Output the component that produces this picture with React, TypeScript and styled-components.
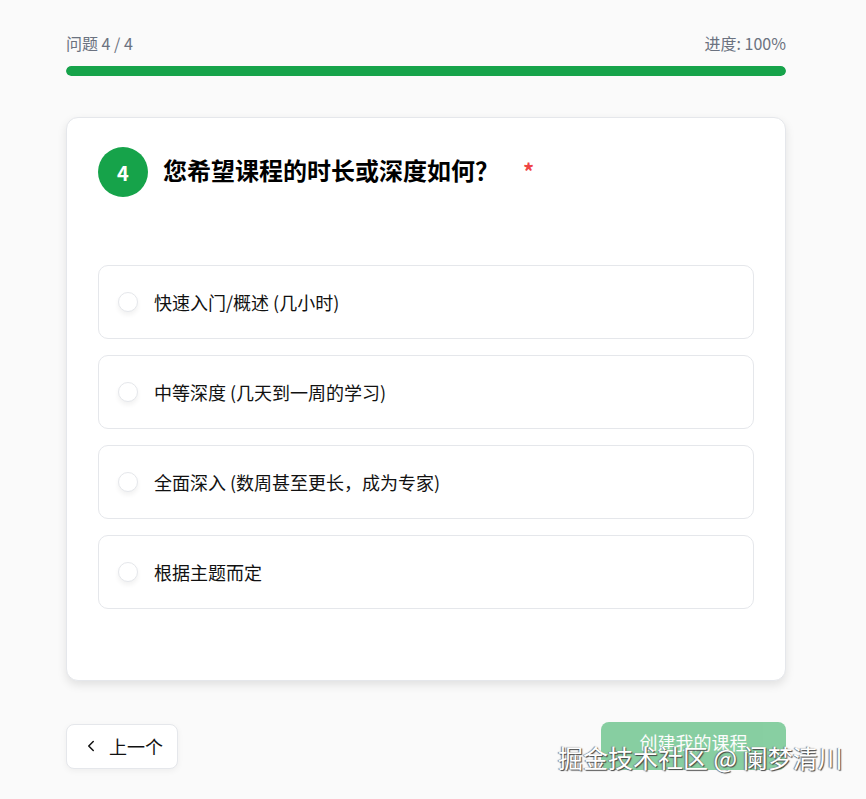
import React, { useState } from 'react';
import styled, { createGlobalStyle } from 'styled-components';
import { ChevronLeft } from 'lucide-react';

const GlobalStyle = createGlobalStyle`
  body {
    margin: 0;
    background: #fafafa;
    font-family: "Noto Sans CJK SC", "Noto Sans", sans-serif;
    color: #111827;
  }
`;

const Page = styled.div`
  position: relative;
  width: 866px;
  min-height: 799px;
  box-sizing: border-box;
  padding: 31px 80px 0 66px;
`;

const ProgressHead = styled.div`
  display: flex;
  justify-content: space-between;
  align-items: center;
  font-size: 16px;
  line-height: 24px;
  color: #6b7280;
`;

const Track = styled.div`
  margin-top: 11px;
  height: 10px;
  border-radius: 5px;
  background: #e5e7eb;
  overflow: hidden;
`;

const Fill = styled.div`
  height: 100%;
  border-radius: 5px;
  background: #16a34a;
`;

const Card = styled.div`
  margin-top: 41px;
  background: #fff;
  border: 1px solid #e5e7eb;
  border-radius: 12px;
  box-shadow: 0 4px 10px rgba(0, 0, 0, 0.1);
  padding: 29px 31px 71px;
`;

const QuestionHead = styled.div`
  display: flex;
  align-items: center;
  gap: 15px;
  margin-bottom: 68px;
`;

const Badge = styled.div`
  width: 50px;
  height: 50px;
  border-radius: 50%;
  background: #16a34a;
  color: #fff;
  font-size: 20px;
  font-weight: 700;
  display: flex;
  align-items: center;
  justify-content: center;
  flex-shrink: 0;
`;

const QuestionTitle = styled.h2`
  margin: 0 0 4px;
  font-size: 24px;
  line-height: 32px;
  font-weight: 700;
  color: #000;
`;

const Required = styled.span`
  color: #ef4444;
  margin-left: 24px;
  font-size: 22px;
`;

const Options = styled.div`
  display: flex;
  flex-direction: column;
  gap: 16px;
`;

const Option = styled.label<{ $active: boolean }>`
  display: flex;
  align-items: center;
  gap: 16px;
  height: 74px;
  box-sizing: border-box;
  padding: 0 19px;
  border: 1px solid ${p => (p.$active ? '#16a34a' : '#e5e7eb')};
  border-radius: 10px;
  background: #fff;
  font-size: 18px;
  color: #111;
  cursor: pointer;
`;

const Radio = styled.span<{ $active: boolean }>`
  width: 18px;
  height: 18px;
  border-radius: 50%;
  border: 1px solid #e5e7eb;
  box-shadow: 0 3px 5px rgba(0, 0, 0, 0.06);
  background: ${p => (p.$active ? '#16a34a' : '#fff')};
  flex-shrink: 0;
`;

const Footer = styled.div`
  margin-top: 41px;
  display: flex;
  justify-content: space-between;
  align-items: center;
`;

const BackButton = styled.button`
  display: flex;
  align-items: center;
  gap: 9px;
  height: 45px;
  padding: 0 14px 0 15px;
  background: #fff;
  border: 1px solid #e5e7eb;
  border-radius: 8px;
  box-shadow: 0 2px 6px rgba(0, 0, 0, 0.05);
  font-family: inherit;
  font-size: 18px;
  color: #111;
  cursor: pointer;
`;

const SubmitButton = styled.button`
  width: 185px;
  height: 48px;
  padding-bottom: 10px;
  border: none;
  border-radius: 8px;
  background: #16a34a;
  opacity: 0.5;
  color: #fff;
  font-family: inherit;
  font-size: 18px;
  cursor: not-allowed;
`;

const Watermark = styled.div`
  position: absolute;
  left: 558px;
  top: 739px;
  font-size: 25px;
  line-height: 36px;
  color: #fff;
  text-shadow: 1px 1px 1px #444, -1px 0 1px #777;
  white-space: nowrap;
  pointer-events: none;
`;

const options = [
  '快速入门/概述 (几小时)',
  '中等深度 (几天到一周的学习)',
  '全面深入 (数周甚至更长，成为专家)',
  '根据主题而定',
];

export default function App() {
  const [selected, setSelected] = useState<number | null>(null);

  return (
    <Page>
      <GlobalStyle />
      <ProgressHead>
        <span>问题 4 / 4</span>
        <span>进度: 100%</span>
      </ProgressHead>
      <Track>
        <Fill style={{ width: '100%' }} />
      </Track>

      <Card>
        <QuestionHead>
          <Badge>4</Badge>
          <QuestionTitle>
            您希望课程的时长或深度如何？<Required>*</Required>
          </QuestionTitle>
        </QuestionHead>
        <Options>
          {options.map((text, i) => (
            <Option key={text} $active={selected === i} onClick={() => setSelected(i)}>
              <Radio $active={selected === i} />
              {text}
            </Option>
          ))}
        </Options>
      </Card>

      <Footer>
        <BackButton>
          <ChevronLeft size={18} strokeWidth={2} />
          上一个
        </BackButton>
        <SubmitButton disabled>创建我的课程</SubmitButton>
      </Footer>

      <Watermark>掘金技术社区 @ 阑梦清川</Watermark>
    </Page>
  );
}
